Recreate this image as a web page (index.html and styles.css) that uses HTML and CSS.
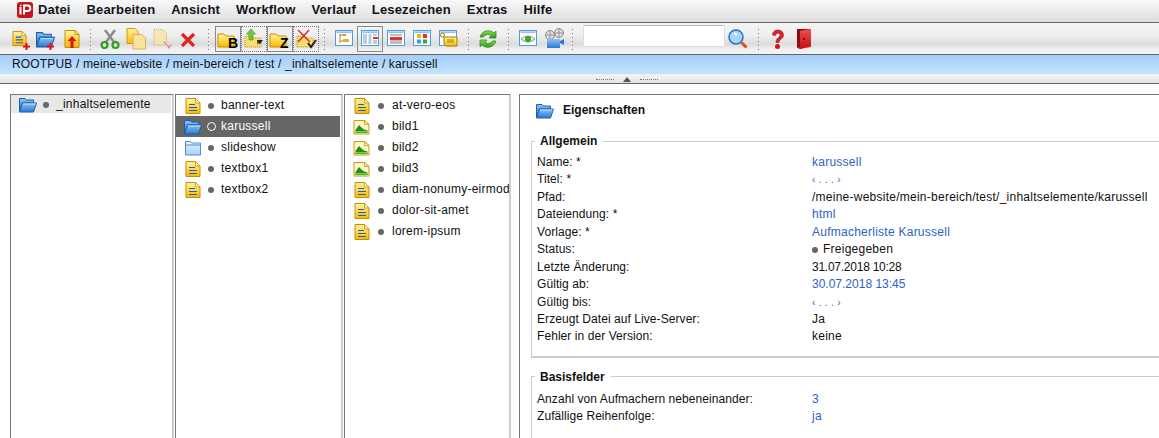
FILE: index.html
```html
<!DOCTYPE html>
<html lang="de">
<head>
<meta charset="utf-8">
<title>Eigenschaften</title>
<link rel="stylesheet" href="styles.css">
</head>
<body>
<svg class="defs" width="0" height="0" aria-hidden="true">
<defs>
<linearGradient id="gy" x1="0" y1="0" x2="0" y2="1"><stop offset="0" stop-color="#fff2a8"/><stop offset=".5" stop-color="#ffd84a"/><stop offset="1" stop-color="#f9b800"/></linearGradient>
<linearGradient id="gb" x1="0" y1="0" x2="0" y2="1"><stop offset="0" stop-color="#8cc4f4"/><stop offset="1" stop-color="#2a78d2"/></linearGradient>
<linearGradient id="gl" x1="0" y1="0" x2="0" y2="1"><stop offset="0" stop-color="#e8f3fd"/><stop offset="1" stop-color="#a9cff2"/></linearGradient>
<linearGradient id="gr" x1="0" y1="0" x2="0" y2="1"><stop offset="0" stop-color="#f05050"/><stop offset="1" stop-color="#c40d0d"/></linearGradient>
<linearGradient id="gg" x1="0" y1="0" x2="0" y2="1"><stop offset="0" stop-color="#8fdc4a"/><stop offset="1" stop-color="#2a9a1c"/></linearGradient>
<symbol id="doc" viewBox="0 0 16 18"><path d="M1 1.500h9.500l4.500 4.500v10.500h-14z" fill="url(#gy)" stroke="#c89000"/><path d="M10.500 1.500v4.500h4.500z" fill="#fff8d0" stroke="#c89000" stroke-width=".8"/><path d="M4 7.500h6M4 10.500h8M4 13.500h8" stroke="#1d62c8" stroke-width="1.200"/></symbol>
<symbol id="img" viewBox="0 0 17 18"><path d="M1 2.500h10.500l4.500 4v9.500h-15z" fill="#fff6c8" stroke="#c89a10"/><path d="M11.500 2.500v4h4.500z" fill="#ffe99a" stroke="#c89a10" stroke-width=".8"/><path d="M2.500 12l3.500-5 3 3 2 1.500 3.500 1v2.500h-12z" fill="#1f8f1f"/><path d="M2.500 13h12v1.500h-12z" fill="#7ed23c"/></symbol>
<symbol id="fopen" viewBox="0 0 18 16"><path d="M.5 14v-12.500h5.500l1.500 1.500h7v3h-11z" fill="url(#gb)" stroke="#1f5fa8"/><path d="M.5 15l3-9h14l-3 9z" fill="url(#gb)" stroke="#1f5fa8"/><path d="M4 7h12.500" stroke="#bfe0fb"/></symbol>
<symbol id="fclosed" viewBox="0 0 18 16"><path d="M1.500 15v-13.500h5l1.500 1.500h8.500v12z" fill="url(#gl)" stroke="#4a8fd6"/><path d="M1.500 5h15" stroke="#4a8fd6"/></symbol>
<symbol id="plus" viewBox="0 0 7 7"><path d="M2.500 0h2v2.500h2.500v2h-2.500v2.500h-2v-2.500h-2.500v-2h2.500z" fill="#e3101a"/></symbol>
<symbol id="view" viewBox="0 0 20 18"><rect x=".5" y=".5" width="19" height="17" fill="#fff" stroke="#3b92dc"/><rect x="1.500" y="1.500" width="17" height="2" fill="#8cc4f4"/></symbol>
<symbol id="sep" viewBox="0 0 2 22"><path d="M.5 1v1M.5 5v1M.5 9v1M.5 13v1M.5 17v1M.5 21v1" stroke="#777" stroke-width="1"/></symbol>
</defs>
</svg>

<nav class="menubar">
  <svg class="logo" viewBox="0 0 16 16" aria-hidden="true"><rect width="16" height="16" rx="3" fill="#c5161d"/><path d="M3.500 5v7.500" stroke="#fff" stroke-width="2"/><path d="M3 3.500h1.500" stroke="#fff" stroke-width="1.500"/><path d="M7 12.500v-9h3.500a2.800 2.800 0 0 1 0 5.600h-3.500" fill="none" stroke="#fff" stroke-width="2"/></svg>
  <span class="menu-item">Datei</span>
  <span class="menu-item">Bearbeiten</span>
  <span class="menu-item">Ansicht</span>
  <span class="menu-item">Workflow</span>
  <span class="menu-item">Verlauf</span>
  <span class="menu-item">Lesezeichen</span>
  <span class="menu-item">Extras</span>
  <span class="menu-item">Hilfe</span>
</nav>

<div class="toolbar">
  <span class="tool"><svg viewBox="0 0 24 24"><use href="#doc" x="4" y="3" width="15" height="17"/><use href="#plus" x="15" y="16" width="7" height="7"/></svg></span>
  <span class="tool"><svg viewBox="0 0 24 24"><use href="#fopen" x="2" y="4" width="19" height="17"/><use href="#plus" x="13" y="16" width="7" height="7"/></svg></span>
  <span class="tool"><svg viewBox="0 0 24 24"><path d="M5 3.500h10l4 4v13h-14z" fill="url(#gy)" stroke="#c89000"/><path d="M15 3.500v4h4z" fill="#fff8d0" stroke="#c89000"/><path d="M12 9l4.500 5h-3v7h-3v-7h-3z" fill="#e3101a"/></svg></span>
  <svg class="sep" aria-hidden="true"><use href="#sep"/></svg>
  <span class="tool"><svg viewBox="0 0 24 24"><path d="M7 3l9 12M17 3l-9 12" stroke="#8c8c8c" stroke-width="2.500"/><circle cx="6.500" cy="18" r="3" fill="none" stroke="#2f9f1f" stroke-width="2.200"/><circle cx="17.500" cy="18" r="3" fill="none" stroke="#2f9f1f" stroke-width="2.200"/></svg></span>
  <span class="tool"><svg viewBox="0 0 24 24"><path d="M3 1.500h8l3 3v12h-11z" fill="url(#gy)" stroke="#d29a10"/><path d="M9 7.500h9l3.500 3.500v11h-12.500z" fill="#fbe29a" stroke="#d8b060"/></svg></span>
  <span class="tool faded"><svg viewBox="0 0 24 24"><path d="M4 2.500h9l3.500 3.500v12h-12.500z" fill="#f8e4a0" stroke="#c8a040" stroke-dasharray="1 1"/><path d="M14 15l5 5M21 18l-3 4" stroke="#e04040" stroke-width="1.500" stroke-dasharray="1.500 1"/></svg></span>
  <span class="tool"><svg viewBox="0 0 24 24"><path d="M6 7l12 12M18 7l-12 12" stroke="#e02525" stroke-width="3.200"/></svg></span>
  <svg class="sep sep-wide" aria-hidden="true"><use href="#sep"/></svg>
  <span class="tool boxed"><svg viewBox="0 0 24 24"><path d="M2 20v-13h6l2 2h8v11z" fill="url(#gy)" stroke="#c89000"/><text class="sort-letter" x="12" y="21">B</text></svg></span>
  <span class="tool dotted"><svg viewBox="0 0 24 24"><path d="M3 20v-11h5l2 2h9v9z" fill="#f8dc70" stroke="#c89000" stroke-dasharray="1 1"/><path d="M9 2l4.500 5h-2.500v6h-4v-6h-2.500z" fill="#6ec83a" stroke="#3a9a1c" stroke-width=".6"/><path d="M15 13h6l-3 4-3-1 1 4" fill="#222"/></svg></span>
  <span class="tool boxed"><svg viewBox="0 0 24 24"><path d="M2 20v-13h6l2 2h8v11z" fill="url(#gy)" stroke="#c89000"/><text class="sort-letter" x="12" y="21">Z</text></svg></span>
  <span class="tool dotted"><svg viewBox="0 0 24 24"><path d="M3 20v-11h5l2 2h9v9z" fill="#f8dc70" stroke="#c89000" stroke-dasharray="1 1"/><path d="M4 3l12 12M15 3l-11 12" stroke="#d92020" stroke-width="1.300"/><path d="M14 16l3 4 5-7" fill="none" stroke="#222" stroke-width="2"/></svg></span>
  <svg class="sep" aria-hidden="true"><use href="#sep"/></svg>
  <span class="tool"><svg viewBox="0 0 24 24"><use href="#view" x="3" y="3" width="18" height="16"/><path d="M8 7v9M8 8h3M8 14h3" stroke="#aa8830"/><rect x="11" y="7" width="3" height="2" fill="#c8a020"/><rect x="11" y="12" width="6" height="3" fill="#e0b020"/></svg></span>
  <span class="tool boxed"><svg viewBox="0 0 24 24"><use href="#view" x="3" y="3" width="18" height="16"/><path d="M5 8h4M5 10h4M5 12h4M5 14h4M5 16h4M10.500 8h3M10.500 10h3M10.500 12h3M10.500 14h3M10.500 16h3" stroke="#7b97c0"/><rect x="15" y="10" width="5" height="2" fill="#e23030"/><path d="M15 8h4M15 14h4M15 16h4" stroke="#7b97c0"/></svg></span>
  <span class="tool"><svg viewBox="0 0 24 24"><use href="#view" x="3" y="3" width="18" height="16"/><path d="M6 8h12M6 14h12M6 16h12" stroke="#7f7f7f"/><rect x="6" y="10" width="12" height="3" fill="#e23030"/></svg></span>
  <span class="tool"><svg viewBox="0 0 24 24"><use href="#view" x="3" y="3" width="18" height="16"/><rect x="7" y="7" width="4" height="4" fill="#f0b818"/><rect x="13" y="7" width="4" height="4" fill="#e23030"/><rect x="7" y="12.500" width="4" height="4" fill="#3a9fe0"/><rect x="13" y="12.500" width="4" height="4" fill="#3aa82a"/></svg></span>
  <span class="tool"><svg viewBox="0 0 24 24"><use href="#view" x="3" y="3" width="18" height="16"/><path d="M8 10h13v9h-11l-2-2z" fill="url(#gy)" stroke="#a87800"/><circle cx="6.500" cy="8" r="2" fill="none" stroke="#a87800"/><path d="M11 13h7M11 15h7" stroke="#a87800"/></svg></span>
  <svg class="sep sep-wide" aria-hidden="true"><use href="#sep"/></svg>
  <span class="tool"><svg viewBox="0 0 24 24"><path d="M4 10a8.500 8.500 0 0 1 14-4l2-2v7h-7l2.200-2.200a5 5 0 0 0-7.700 1.200z" fill="url(#gg)" stroke="#1f8a18" stroke-width=".7"/><path d="M20 14a8.500 8.500 0 0 1-14 4l-2 2v-7h7l-2.200 2.200a5 5 0 0 0 7.700-1.200z" fill="url(#gg)" stroke="#1f8a18" stroke-width=".7"/></svg></span>
  <svg class="sep sep-wide" aria-hidden="true"><use href="#sep"/></svg>
  <span class="tool"><svg viewBox="0 0 24 24"><use href="#view" x="3" y="3" width="18" height="16"/><path d="M5 12q7-6 14 0q-7 6-14 0z" fill="#fff" stroke="#888"/><circle cx="12" cy="12" r="3" fill="#30b020"/></svg></span>
  <span class="tool"><svg viewBox="0 0 24 24"><circle cx="8" cy="8" r="4.500" fill="#ddd" stroke="#888"/><circle cx="17" cy="6" r="4.500" fill="#ddd" stroke="#888"/><path d="M8 4v8M4 8h8M17 2v8M13 6h8" stroke="#888" stroke-width=".8"/><path d="M5 12h13v9h-13z" fill="url(#gb)"/><path d="M18 14l4-2v6l-4-2z" fill="#2a78d2"/></svg></span>
  <svg class="sep" aria-hidden="true"><use href="#sep"/></svg>
  <input class="search" type="text" aria-label="Suche">
  <span class="tool"><svg viewBox="0 0 24 24"><circle cx="10" cy="10" r="7" fill="#a8d4f6" stroke="#2a70c0" stroke-width="1.500"/><path d="M8 6.500h2v2" stroke="#fff" stroke-width="1.500" fill="none"/><path d="M15.500 15.500l5 5" stroke="#d8501a" stroke-width="3"/></svg></span>
  <svg class="sep sep-wide" aria-hidden="true"><use href="#sep"/></svg>
  <span class="tool"><svg viewBox="0 0 24 24"><path d="M6.500 8c0-7 11-6.500 11 0 0 4-4.500 4-4.500 7.500h-3c0-5 4-5 4-7.500 0-2.500-4-2.500-4.500.5z" fill="#dd2228" stroke="#a01015" stroke-width=".6"/><circle cx="11.500" cy="19.500" r="2.500" fill="#cc1a20"/></svg></span>
  <span class="tool"><svg viewBox="0 0 24 24"><path d="M5 2h14v18l-12 2-2-2z" fill="#e02a2a"/><path d="M5 2h12l-9 2v16l-3 1z" fill="#8a0d0d"/><path d="M8 4l11-2v17l-11 3z" fill="url(#gr)"/><rect x="11" y="11" width="2" height="2" fill="#5a0808"/></svg></span>
</div>

<div class="breadcrumb">ROOTPUB / meine-website / mein-bereich / test / _inhaltselemente / karussell</div>

<div class="splitter"><span class="grip"></span><span class="arrow"></span><span class="grip"></span></div>

<main class="workspace">
  <section class="pane pane-a">
    <div class="row row-active"><svg class="ico"><use href="#fopen"/></svg><i class="dot"></i><span>_inhaltselemente</span></div>
  </section>
  <section class="pane pane-b">
    <div class="row"><svg class="ico ico-doc"><use href="#doc"/></svg><i class="dot"></i><span>banner-text</span></div>
    <div class="row row-selected"><svg class="ico"><use href="#fopen"/></svg><i class="dot dot-ring"></i><span>karussell</span></div>
    <div class="row"><svg class="ico"><use href="#fclosed"/></svg><i class="dot"></i><span>slideshow</span></div>
    <div class="row"><svg class="ico ico-doc"><use href="#doc"/></svg><i class="dot"></i><span>textbox1</span></div>
    <div class="row"><svg class="ico ico-doc"><use href="#doc"/></svg><i class="dot"></i><span>textbox2</span></div>
  </section>
  <section class="pane pane-c">
    <div class="row"><svg class="ico ico-doc"><use href="#doc"/></svg><i class="dot"></i><span>at-vero-eos</span></div>
    <div class="row"><svg class="ico ico-img"><use href="#img"/></svg><i class="dot"></i><span>bild1</span></div>
    <div class="row"><svg class="ico ico-img"><use href="#img"/></svg><i class="dot"></i><span>bild2</span></div>
    <div class="row"><svg class="ico ico-img"><use href="#img"/></svg><i class="dot"></i><span>bild3</span></div>
    <div class="row"><svg class="ico ico-doc"><use href="#doc"/></svg><i class="dot"></i><span>diam-nonumy-eirmod</span></div>
    <div class="row"><svg class="ico ico-doc"><use href="#doc"/></svg><i class="dot"></i><span>dolor-sit-amet</span></div>
    <div class="row"><svg class="ico ico-doc"><use href="#doc"/></svg><i class="dot"></i><span>lorem-ipsum</span></div>
  </section>
  <section class="details">
    <h2 class="details-title"><svg class="ico"><use href="#fopen"/></svg>Eigenschaften</h2>
    <fieldset class="group">
      <legend>Allgemein</legend>
      <div class="prop"><span class="key">Name: *</span><a class="val">karussell</a></div>
      <div class="prop"><span class="key">Titel: *</span><a class="val empty">‹ . . . ›</a></div>
      <div class="prop"><span class="key">Pfad:</span><span class="txt">/meine-website/mein-bereich/test/_inhaltselemente/karussell</span></div>
      <div class="prop"><span class="key">Dateiendung: *</span><a class="val">html</a></div>
      <div class="prop"><span class="key">Vorlage: *</span><a class="val">Aufmacherliste Karussell</a></div>
      <div class="prop"><span class="key">Status:</span><span class="txt"><i class="dot dot-small"></i>Freigegeben</span></div>
      <div class="prop"><span class="key">Letzte Änderung:</span><span class="date date-narrow">31.07.2018 10:28</span></div>
      <div class="prop"><span class="key">Gültig ab:</span><a class="val date">30.07.2018 13:45</a></div>
      <div class="prop"><span class="key">Gültig bis:</span><a class="val empty">‹ . . . ›</a></div>
      <div class="prop"><span class="key">Erzeugt Datei auf Live-Server:</span><span class="txt">Ja</span></div>
      <div class="prop"><span class="key">Fehler in der Version:</span><span class="txt">keine</span></div>
    </fieldset>
    <fieldset class="group group-base">
      <legend>Basisfelder</legend>
      <div class="prop"><span class="key">Anzahl von Aufmachern nebeneinander:</span><a class="val">3</a></div>
      <div class="prop"><span class="key">Zufällige Reihenfolge:</span><a class="val">ja</a></div>
    </fieldset>
  </section>
</main>
</body>
</html>
```
FILE: styles.css
```css
* { box-sizing: border-box; }
html, body { height: 100%; }
body {
  margin: 0;
  overflow: hidden;
  display: flex;
  flex-direction: column;
  background: #fff;
  color: #111;
  font: 12px/17.4px "Liberation Sans", Arial, sans-serif;
}
.defs { position: absolute; }

.menubar {
  flex: none;
  height: 23px;
  display: flex;
  align-items: center;
  gap: 16px;
  padding: 0 0 2px 17px;
  background: linear-gradient(#f9f9f9, #dcdcdc);
  border-bottom: 1px solid #666;
}
.logo { width: 16px; height: 16px; margin-right: -11px; flex: none; }
.menu-item { font-size: 13px; font-weight: bold; letter-spacing: .15px; color: #10131a; }

.toolbar {
  flex: none;
  height: 32px;
  display: flex;
  align-items: center;
  padding-left: 7px;
  background: linear-gradient(#f4f4f4 0, #efefef 40%, #dcdcdc 68%, #f0f0f0 85%, #f2f2f2 100%);
  border-bottom: 1px solid #666;
}
.tool {
  flex: none;
  width: 26px;
  height: 26px;
  display: flex;
  align-items: center;
  justify-content: center;
}
.tool svg { width: 24px; height: 24px; }
.boxed { border: 1px solid #8a8a8a; }
.dotted { border: 1px dotted #777; }
.faded { opacity: .75; }
.sep { flex: none; width: 2px; height: 22px; margin: 0 5px; }
.sep-wide { margin: 0 5px 0 7px; }
.sort-letter { font: bold 14px "Liberation Sans", Arial, sans-serif; fill: #000; }
.search {
  flex: none;
  width: 142px;
  height: 22px;
  margin: 0 0 5px 4px;
  background: #fff;
  border: 1px solid #ddd;
  border-top-color: #bbb;
  border-radius: 2px;
}

.breadcrumb {
  flex: none;
  height: 20px;
  padding-left: 12px;
  line-height: 18px;
  letter-spacing: .16px;
  background: linear-gradient(#a4cdf9, #c3e3fc);
  border-bottom: 1px solid #e8f2fb;
  color: #10131a;
}
.splitter {
  flex: none;
  height: 9px;
  display: flex;
  align-items: center;
  justify-content: center;
  gap: 9px;
  padding-left: 94px;
  background: linear-gradient(#f3f3f3, #e4e4e4);
  border-bottom: 1px solid #666;
}
.grip { width: 18px; border-top: 1px dotted #777; }
.arrow { width: 0; height: 0; border: 4px solid transparent; border-top: 0; border-bottom: 5px solid #555; }

.workspace {
  flex: 1;
  min-height: 0;
  display: flex;
  padding: 10px 0 0 10px;
  overflow: hidden;
}
.pane {
  flex: none;
  height: 100%;
  border-top: 1px solid #777;
  border-left: 1px solid #777;
  border-right: 2px solid #ccc;
  overflow: hidden;
}
.pane-a { width: 164px; margin-right: 1px; padding-right: 1px; }
.pane-b { width: 168px; padding-right: 1px; margin-right: 1px; }
.pane-c { width: 167px; }
.row {
  height: 21px;
  display: flex;
  align-items: center;
  white-space: nowrap;
  padding-left: 9px;
  letter-spacing: .25px;
}
.row-active { height: 18px; padding-top: 2px; background: #e8e8e8; margin-bottom: 3px; }
.row-selected { background: #666; color: #fff; }
.ico { flex: none; width: 18px; height: 16px; margin-left: -1px; }
.ico-doc { width: 16px; height: 18px; margin-left: 0; }
.ico-img { width: 17px; height: 18px; }
.dot {
  flex: none;
  width: 6px;
  height: 6px;
  margin: 0 7px 0 6px;
  border-radius: 50%;
  background: #666;
}
.ico-doc + .dot { margin-left: 7px; }
.pane-c .dot { margin: 0 8px; }
.dot-ring { width: 9px; height: 9px; margin: 0 5px; background: transparent; border: 1px solid #fff; }
.dot-small { display: inline-block; margin: 0 5px 0 0; vertical-align: 0; }

.details {
  flex: 1;
  min-width: 0;
  height: 100%;
  margin-left: 8px;
  padding: 0 0 0 11px;
  border-top: 1px solid #777;
  border-left: 1px solid #777;
  overflow: hidden;
}
.details-title {
  display: flex;
  align-items: center;
  gap: 9px;
  height: 16px;
  margin: 8px 0 15px 6px;
  font-size: 12px;
  font-weight: bold;
}
.group {
  width: 700px;
  margin: 0;
  padding: 6px 0 10px 5px;
  border: 2px solid #ccc;
  border-width: 1px 1px 2px 1px;
  min-width: 0;
}
.group legend { padding: 0 6px 0 5px; margin-left: -2px; font-weight: bold; font-size: 12px; line-height: 14px; }
.group-base { margin-top: 12px; padding-top: 7px; min-height: 90px; }
.prop { display: flex; height: 17.45px; white-space: nowrap; }
.key { flex: none; width: 275px; letter-spacing: .07px; }
.val, .txt { letter-spacing: .25px; }
.val { color: #2d62c4; }
.date { letter-spacing: 0; }
.date-narrow { letter-spacing: -.25px; }
.empty { font-size: 10px; letter-spacing: .3px; }
```
